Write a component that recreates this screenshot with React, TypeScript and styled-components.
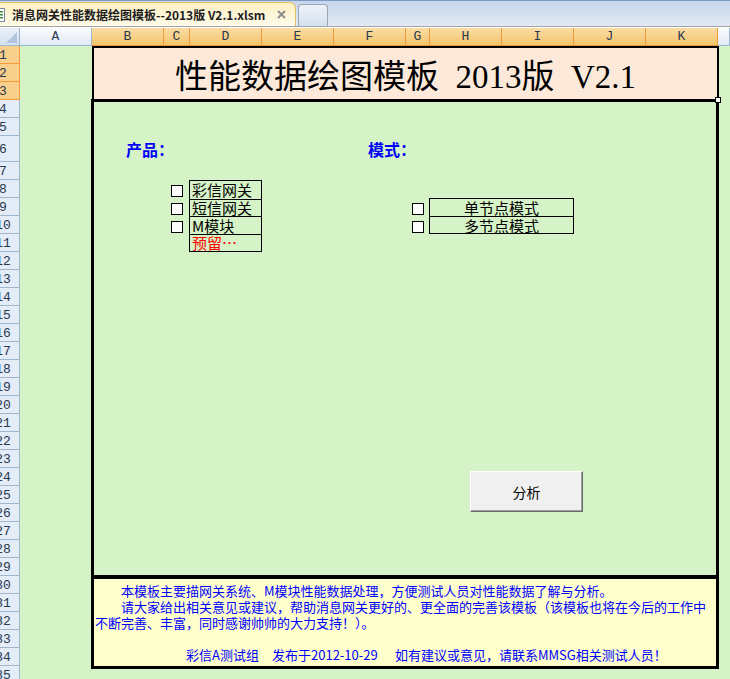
import React from 'react';
import styled, { createGlobalStyle } from 'styled-components';

const GREEN = '#d5f3c6';

const GlobalStyle = createGlobalStyle`
  html, body {
    margin: 0;
    padding: 0;
    background: ${GREEN};
    overflow: hidden;
  }
  body {
    font-family: "Noto Sans CJK SC", "Noto Sans", sans-serif;
  }
`

const Frame = styled.div`
  width: 730px;
  height: 679px;
  overflow: hidden;
  display: flex;
  flex-direction: column;
`

// ---- workbook tab strip ----
const TabStrip = styled.div`
  flex: none;
  height: 28px;
  box-sizing: border-box;
  padding-bottom: 1px;
  display: flex;
  align-items: flex-end;
  gap: 2px;
  background: linear-gradient(#c6d6ec, #e2eaf5);
  border-top: 1px solid #7d9bc6;
  border-bottom: 1px solid #ffffff;
  box-shadow: inset 0 -1px 0 #a3a3a3;
`

const ActiveTab = styled.div`
  width: 296px;
  height: 24px;
  box-sizing: border-box;
  display: flex;
  align-items: center;
  overflow: hidden;
  background: linear-gradient(#fdf0c2, #fffbea);
  border-top: 1px solid #e3bd62;
  border-right: 1px solid #e3bd62;
  border-top-right-radius: 6px;
  font-size: 12px;
  font-weight: 700;
  color: #1d1d1d;
  white-space: nowrap;
`

const FileIcon = styled.svg`
  flex: none;
  margin-left: -8px;
  margin-right: 6px;
`

const CloseMark = styled.svg`
  flex: none;
  margin-left: auto;
  margin-right: 9px;
`

const BlankTab = styled.div`
  width: 30px;
  height: 22px;
  box-sizing: border-box;
  border: 1px solid #9aa6b8;
  border-bottom: none;
  border-radius: 4px 4px 0 0;
  background: linear-gradient(#eef3fa, #d4dfee);
`

// ---- spreadsheet grid ----
const Sheet = styled.div`
  flex: none;
  display: grid;
  grid-template-columns: 20px 72px 72px 26px 72px 72px 72px 24px 72px 72px 72px 72px 1fr;
  grid-template-rows: 18px repeat(5, 18px) 26px repeat(29, 18px);
  background: ${GREEN};
`

const Corner = styled.div`
  grid-column: 1;
  grid-row: 1;
  position: relative;
  box-sizing: border-box;
  background: linear-gradient(#eaf0f8, #d5e1f1);
  border-right: 1px solid #9eb6ce;
  border-bottom: 1px solid #9eb6ce;

  &::after {
    content: '';
    position: absolute;
    right: 2px;
    bottom: 2px;
    border-style: solid;
    border-width: 0 0 11px 11px;
    border-color: transparent transparent #b3c5de transparent;
  }
`

const ColHead = styled.div<{ $col: number; $sel?: boolean }>`
  grid-column: ${p => p.$col};
  grid-row: 1;
  box-sizing: border-box;
  display: flex;
  align-items: center;
  justify-content: center;
  font: 13px "Liberation Mono", monospace;
  color: #27394f;
  border-right: 1px solid ${p => (p.$sel ? '#f29b3b' : '#9eb6ce')};
  border-bottom: 1px solid ${p => (p.$sel ? '#f29436' : '#9eb6ce')};
  background: ${p =>
    p.$sel ? 'linear-gradient(#fbdca4, #f3c56c)' : 'linear-gradient(#fafcfe, #e2eaf5)'};
`

const RowHead = styled.div<{ $row: number; $sel?: boolean }>`
  grid-column: 1;
  grid-row: ${p => p.$row + 1};
  box-sizing: border-box;
  overflow: hidden;
  display: flex;
  align-items: center;
  padding-top: 1px;
  font: 13px "Liberation Mono", monospace;
  color: #27394f;
  background: ${p => (p.$sel ? '#f9d08b' : '#e4ecf7')};
  border-right: 1px solid ${p => (p.$sel ? '#f29b3b' : '#9eb6ce')};
  border-bottom: 1px solid ${p => (p.$sel ? '#f29b3b' : '#9eb6ce')};
`

const RowNum = styled.span`
  flex: none;
  width: 34px;
  margin-left: -14px;
  text-align: center;
`

const TitleBlock = styled.div`
  grid-column: 3 / 13;
  grid-row: 2 / 5;
  position: relative;
  margin: 0 -1px -1px 0;
  box-sizing: border-box;
  display: flex;
  align-items: center;
  justify-content: center;
  background: #fde9d9;
  border: 2px solid #000;
  font-family: "Liberation Serif", "Noto Sans CJK SC", serif;
  font-size: 33px;
  white-space: pre;
  color: #000;

  &::after {
    content: '';
    position: absolute;
    right: -4px;
    bottom: -4px;
    width: 4px;
    height: 4px;
    background: #fff;
    border: 1px solid #000;
  }
`

const Panel = styled.div`
  grid-column: 3 / 13;
  grid-row: 5 / 31;
  margin: -1px -1px -2px -1px;
  border: 3px solid #000;
`

const SectionLabel = styled.div<{ $col: number }>`
  grid-column: ${p => p.$col} / span 2;
  grid-row: 7;
  align-self: center;
  padding-left: 34px;
  color: #0000ff;
  font-weight: 700;
  font-size: 16px;
  line-height: 18px;
  white-space: nowrap;
`

const CheckBox = styled.span<{ $col: number; $row: number }>`
  grid-column: ${p => p.$col};
  grid-row: ${p => p.$row + 1};
  justify-self: center;
  align-self: end;
  width: 12px;
  height: 12px;
  margin-bottom: 1px;
  box-sizing: border-box;
  border: 1px solid #000;
  background: #fff;
`

const ProductList = styled.div`
  grid-column: 5;
  grid-row: 9 / 13;
  margin-left: -1px;
  border: 1px solid #000;
  display: grid;
  grid-template-rows: repeat(4, 1fr);
`

const ProductItem = styled.div<{ $reserved?: boolean }>`
  display: flex;
  align-items: center;
  padding-left: 2px;
  font-size: 15px;
  line-height: 1;
  white-space: nowrap;
  color: ${p => (p.$reserved ? '#ff0000' : '#000')};

  & + & {
    border-top: 1px solid #000;
  }
`

const ModeList = styled.div`
  grid-column: 9 / 11;
  grid-row: 10 / 12;
  margin-left: -1px;
  border: 1px solid #000;
  display: grid;
  grid-template-rows: repeat(2, 1fr);
`

const ModeItem = styled.div`
  display: flex;
  align-items: center;
  justify-content: center;
  font-size: 15px;
  line-height: 1;
  color: #000;

  & + & {
    border-top: 1px solid #000;
  }
`

const AnalyzeButton = styled.button`
  grid-column: 9 / 12;
  grid-row: 25 / 28;
  justify-self: start;
  align-self: start;
  margin: 3px 0 0 40px;
  width: 113px;
  height: 41px;
  padding: 0;
  background: #f0f0f0;
  border: 1px solid;
  border-color: #ffffff #6a6a6a #6a6a6a #ffffff;
  box-shadow: inset -1px -1px 0 #a0a0a0;
  font: 14px "Noto Sans CJK SC", sans-serif;
  color: #000;
`

const Notes = styled.div`
  grid-column: 3 / 13;
  grid-row: 31 / 36;
  margin: 0 -1px -3px -1px;
  border: 3px solid #000;
  background: #ffffcc;
  padding: 4px 0 0 1px;
  color: #0000ff;
  font-size: 13px;
  line-height: 16px;
  white-space: nowrap;
  overflow: hidden;
`

const NoteLine = styled.div<{ $indent?: boolean }>`
  height: 16px;
  padding-left: ${p => (p.$indent ? 26 : 0)}px;
`

const Signature = styled.div`
  display: flex;
  height: 16px;
  margin-top: 16px;
  padding-left: 91px;
`

const SignPart = styled.span<{ $w?: number }>`
  flex: none;
  width: ${p => (p.$w ? `${p.$w}px` : 'auto')};
`

const COLS: { letter: string; sel: boolean }[] = [
  { letter: 'A', sel: false },
  { letter: 'B', sel: true },
  { letter: 'C', sel: true },
  { letter: 'D', sel: true },
  { letter: 'E', sel: true },
  { letter: 'F', sel: true },
  { letter: 'G', sel: true },
  { letter: 'H', sel: true },
  { letter: 'I', sel: true },
  { letter: 'J', sel: true },
  { letter: 'K', sel: true },
  { letter: '', sel: false },
];

const ROWS = Array.from({ length: 35 }, (_, i) => i + 1);

function App() {
  return (
    <Frame>
      <GlobalStyle />
      <TabStrip>
        <ActiveTab>
          <FileIcon width="14" height="14" viewBox="0 0 14 14">
            <rect x="1.5" y="0.5" width="11" height="13" fill="#fff" stroke="#7a8aa0" />
            <rect x="3" y="3" width="8" height="1.5" fill="#3a8d3a" />
            <rect x="3" y="6" width="8" height="1.5" fill="#3a8d3a" />
            <rect x="3" y="9" width="8" height="1.5" fill="#3a8d3a" />
            <rect x="0" y="4" width="7" height="7" fill="#2f7a32" />
          </FileIcon>
          消息网关性能数据绘图模板--2013版 V2.1.xlsm
          <CloseMark width="9" height="9" viewBox="0 0 9 9">
            <path d="M1 1 L8 8 M8 1 L1 8" stroke="#8f8f8f" strokeWidth="2" />
          </CloseMark>
        </ActiveTab>
        <BlankTab />
      </TabStrip>

      <Sheet>
        <Corner />
        {COLS.map((c, i) => (
          <ColHead key={i} $col={i + 2} $sel={c.sel}>
            {c.letter}
          </ColHead>
        ))}
        {ROWS.map(r => (
          <RowHead key={r} $row={r} $sel={r <= 3}>
            <RowNum>{r}</RowNum>
          </RowHead>
        ))}

        <TitleBlock>性能数据绘图模板  2013版  V2.1</TitleBlock>

        <Panel />
        <SectionLabel $col={3}>产品：</SectionLabel>
        <SectionLabel $col={7}>模式：</SectionLabel>

        <CheckBox $col={4} $row={8} />
        <CheckBox $col={4} $row={9} />
        <CheckBox $col={4} $row={10} />
        <ProductList>
          <ProductItem>彩信网关</ProductItem>
          <ProductItem>短信网关</ProductItem>
          <ProductItem>M模块</ProductItem>
          <ProductItem $reserved>预留…</ProductItem>
        </ProductList>

        <CheckBox $col={8} $row={9} />
        <CheckBox $col={8} $row={10} />
        <ModeList>
          <ModeItem>单节点模式</ModeItem>
          <ModeItem>多节点模式</ModeItem>
        </ModeList>

        <AnalyzeButton>分析</AnalyzeButton>

        <Notes>
          <NoteLine $indent>本模板主要描网关系统、M模块性能数据处理，方便测试人员对性能数据了解与分析。</NoteLine>
          <NoteLine $indent>请大家给出相关意见或建议，帮助消息网关更好的、更全面的完善该模板（该模板也将在今后的工作中</NoteLine>
          <NoteLine>不断完善、丰富，同时感谢帅帅的大力支持！）。</NoteLine>
          <Signature>
            <SignPart $w={86}>彩信A测试组</SignPart>
            <SignPart $w={123}>发布于2012-10-29</SignPart>
            <SignPart>如有建议或意见，请联系MMSG相关测试人员！</SignPart>
          </Signature>
        </Notes>
      </Sheet>
    </Frame>
  );
}

export default App;
